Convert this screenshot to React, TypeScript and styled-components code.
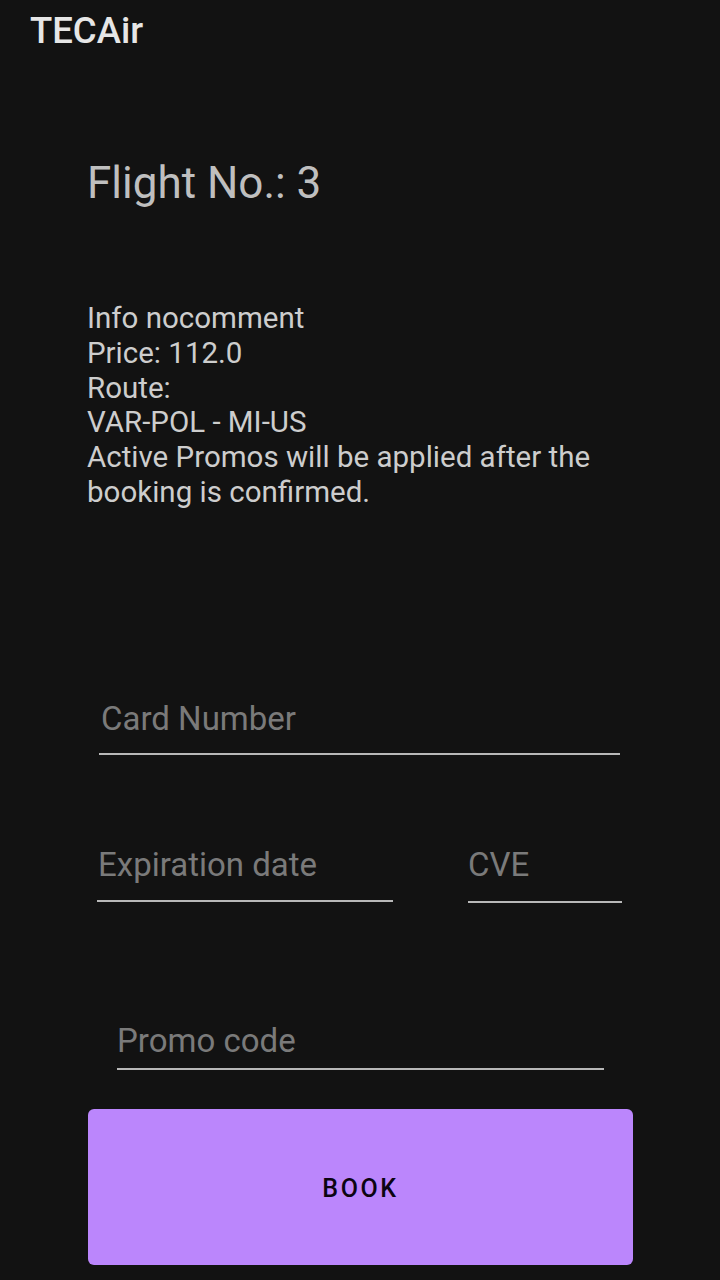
import React from "react";
import styled, { createGlobalStyle } from "styled-components";

const GlobalStyle = createGlobalStyle`
  html, body {
    margin: 0;
    padding: 0;
    background: #121212;
  }
  body {
    font-family: Roboto, "Noto Sans", sans-serif;
  }
  * { box-sizing: border-box; }
`;

const Screen = styled.div`
  width: 720px;
  min-height: 1280px;
  background: #121212;
  display: flex;
  flex-direction: column;
  overflow: hidden;
`;

const AppBar = styled.header`
  padding: 9px 0 0 30px;
  font-size: 36.5px;
  line-height: 44px;
  font-weight: 500;
  color: #e6e6e6;
`;

const Title = styled.h1`
  margin: 104px 0 0 87px;
  font-size: 44px;
  line-height: 52px;
  font-weight: 400;
  color: #bfbfbf;
`;

const Info = styled.div`
  margin: 92px 0 0 87px;
  width: 560px;
  font-size: 29.5px;
  line-height: 34.8px;
  color: #cdcdcd;
`;

const Field = styled.input<{ $left: number; $width: number; $pad: number; $indent?: number }>`
  display: block;
  margin-left: ${(p) => p.$left}px;
  width: ${(p) => p.$width}px;
  height: ${(p) => 40 + p.$pad + 2}px;
  padding: 0 0 ${(p) => p.$pad}px ${(p) => p.$indent ?? 0}px;
  border: none;
  border-bottom: 2px solid #b8b8b8;
  background: transparent;
  font-family: Roboto, sans-serif;
  font-size: 33px;
  line-height: 40px;
  color: #e0e0e0;
  outline: none;
  &::placeholder {
    color: #7a7a7a;
  }
`;

const Block = styled.div<{ $top: number }>`
  margin-top: ${(p) => p.$top}px;
`;

const Row = styled.div`
  display: flex;
  align-items: flex-start;
  margin-top: 90px;
`;

const BookButton = styled.button`
  margin: 39px 0 0 88px;
  width: 545px;
  height: 156px;
  padding: 4px 0 0;
  border: none;
  border-radius: 6px;
  background: #bb86fc;
  color: #0c0412;
  font-family: Roboto, sans-serif;
  font-size: 25px;
  font-weight: 500;
  letter-spacing: 2.6px;
  text-transform: uppercase;
`;

export default function App() {
  return (
    <>
      <GlobalStyle />
      <Screen>
        <AppBar>TECAir</AppBar>
        <Title>Flight No.: 3</Title>
        <Info>
          Info nocomment
          <br />
          Price: 112.0
          <br />
          Route:
          <br />
          VAR-POL - MI-US
          <br />
          Active Promos will be applied after the booking is confirmed.
        </Info>
        <Block $top={189}>
          <Field $left={99} $width={521} $pad={14} $indent={2} placeholder="Card Number" />
        </Block>
        <Row>
          <Field $left={97} $width={296} $pad={15} $indent={1} placeholder="Expiration date" />
          <Field $left={75} $width={154} $pad={16} placeholder="CVE" />
        </Row>
        <Block $top={118}>
          <Field $left={117} $width={487} $pad={7} placeholder="Promo code" />
        </Block>
        <BookButton>Book</BookButton>
      </Screen>
    </>
  );
}
